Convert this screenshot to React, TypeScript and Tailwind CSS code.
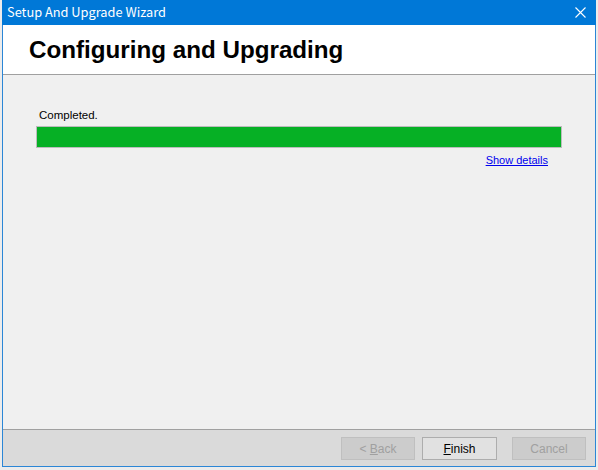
export default function App() {
  const ui = { fontFamily: '"Liberation Sans", Arial, sans-serif' };

  return (
    <div className="w-[598px] h-[470px] bg-[#ececec] overflow-hidden" style={ui}>
      {/* window frame */}
      <div className="ml-[2px] w-[594px] h-[467px] flex flex-col border-x border-b border-[#2b86d6]">
        {/* title bar */}
        <div className="h-[25px] shrink-0 bg-[#0078d7] -mx-px flex items-center justify-between pl-[5px] pr-[10px]">
          <span
            className="text-white text-[12.8px] leading-none"
            style={{ fontFamily: '"Noto Sans CJK SC", "Noto Sans", sans-serif' }}
          >
            Setup And Upgrade Wizard
          </span>
          <svg width="11" height="11" viewBox="0 0 11 11" className="text-white">
            <path d="M0.5 0.5 L10.5 10.5 M10.5 0.5 L0.5 10.5" stroke="currentColor" strokeWidth="1.1" fill="none" />
          </svg>
        </div>

        {/* header */}
        <div className="h-[50px] shrink-0 bg-white border-b border-[#a0a0a0] flex items-center pl-[26px] pt-[2px]">
          <h1 className="text-[24.2px] font-bold text-black leading-none">Configuring and Upgrading</h1>
        </div>

        {/* body */}
        <div className="flex-1 bg-[#f0f0f0] pt-[34px] pl-[33px] pr-[33px]">
          <p className="text-[11.5px] leading-[13px] text-black pl-[3px]">Completed.</p>
          <div className="mt-[4px] h-[22px] border border-[#bcbcbc] bg-[#06b025]" />
          <div className="flex justify-end pr-[14px] mt-[6px]">
            <a href="#" className="text-[11px] leading-[13px] text-[#0000ee] underline">Show details</a>
          </div>
        </div>

        {/* footer */}
        <div className="h-[37px] shrink-0 bg-[#dadada] border-t border-[#a0a0a0] flex items-start justify-end pt-[7px] pr-[9px]">
          <button className="w-[74px] h-[23px] border border-[#bfbfbf] bg-[#cccccc] text-[12px] text-[#a0a0a0]">
            &lt; <span className="underline">B</span>ack
          </button>
          <button className="ml-[7px] w-[75px] h-[23px] border border-[#adadad] bg-[#e1e1e1] text-[12px] text-black">
            <span className="underline">F</span>inish
          </button>
          <button className="ml-[15px] w-[74px] h-[23px] border border-[#bfbfbf] bg-[#cccccc] text-[12px] text-[#a0a0a0]">
            Cancel
          </button>
        </div>
      </div>
    </div>
  );
}
